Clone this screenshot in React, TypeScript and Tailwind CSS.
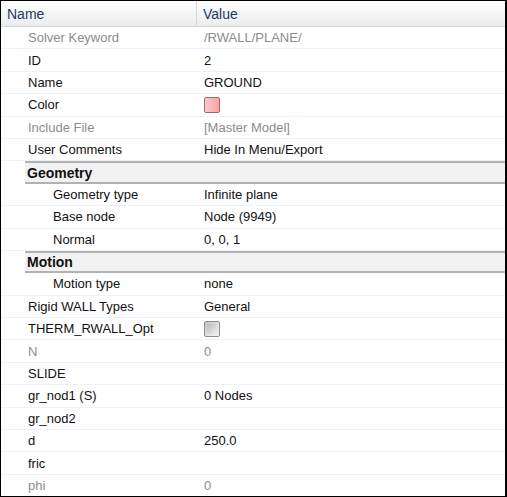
import React from "react";

type Row =
  | { kind: "prop"; name: string; value?: string; indent?: boolean; muted?: boolean; swatch?: "color" | "check" }
  | { kind: "section"; name: string };

const rows: Row[] = [
  { kind: "prop", name: "Solver Keyword", value: "/RWALL/PLANE/", muted: true },
  { kind: "prop", name: "ID", value: "2" },
  { kind: "prop", name: "Name", value: "GROUND" },
  { kind: "prop", name: "Color", swatch: "color" },
  { kind: "prop", name: "Include File", value: "[Master Model]", muted: true },
  { kind: "prop", name: "User Comments", value: "Hide In Menu/Export" },
  { kind: "section", name: "Geometry" },
  { kind: "prop", name: "Geometry type", value: "Infinite plane", indent: true },
  { kind: "prop", name: "Base node", value: "Node (9949)", indent: true },
  { kind: "prop", name: "Normal", value: "0, 0, 1", indent: true },
  { kind: "section", name: "Motion" },
  { kind: "prop", name: "Motion type", value: "none", indent: true },
  { kind: "prop", name: "Rigid WALL Types", value: "General" },
  { kind: "prop", name: "THERM_RWALL_Opt", swatch: "check" },
  { kind: "prop", name: "N", value: "0", muted: true },
  { kind: "prop", name: "SLIDE" },
  { kind: "prop", name: "gr_nod1 (S)", value: "0 Nodes" },
  { kind: "prop", name: "gr_nod2" },
  { kind: "prop", name: "d", value: "250.0" },
  { kind: "prop", name: "fric" },
  { kind: "prop", name: "phi", value: "0", muted: true },
];

function PropRow({ row }: { row: Extract<Row, { kind: "prop" }> }) {
  const tone = row.muted ? "text-[#8c8c8c]" : "text-[#111]";
  return (
    <div className={`flex h-[22.4px] items-center border-b border-[#eaf2fb] ${tone}`}>
      <div className={`w-[196px] shrink-0 ${row.indent ? "pl-[52px]" : "pl-[27px]"}`}>{row.name}</div>
      <div className="flex items-center pl-[7px]">
        {row.swatch === "color" && (
          <span className="block w-[16px] h-[16px] border border-[#a06a6a] rounded-[2px] bg-gradient-to-r from-[#fbc9c9] to-[#f7a3a3]" />
        )}
        {row.swatch === "check" && (
          <span className="block w-[16px] h-[16px] border border-[#8e8f8f] rounded-[2px] bg-gradient-to-br from-[#c8c8c8] to-[#f4f4f4] p-[2px]">
            <span className="block w-full h-full bg-gradient-to-br from-[#bdbdbd] to-[#ededed]" />
          </span>
        )}
        {row.value}
      </div>
    </div>
  );
}

function SectionRow({ name }: { name: string }) {
  return (
    <div className="flex h-[22.4px] pl-[24px]">
      <div className="flex-1 flex items-center bg-[#f2f2f2] border-y-2 border-[#b2b2b2] pl-[2px] text-[14px] font-bold text-[#111]">
        {name}
      </div>
    </div>
  );
}

export default function App() {
  return (
    <div
      className="w-[507px] h-[497px] bg-white border-t border-l border-b border-r-2 border-black overflow-hidden text-[13px] leading-none"
      style={{ fontFamily: '"Liberation Sans", Arial, sans-serif' }}
    >
      <div className="flex h-[26px] bg-gradient-to-b from-white to-[#eaecee] border-b border-[#d5d5d5] text-[14px] text-[#1e395b]">
        <div className="w-[196px] shrink-0 flex items-center pl-[6px] border-r border-[#d5d5d5]">Name</div>
        <div className="flex items-center pl-[6px]">Value</div>
      </div>
      {rows.map((r, i) =>
        r.kind === "section" ? <SectionRow key={i} name={r.name} /> : <PropRow key={i} row={r} />
      )}
    </div>
  );
}
